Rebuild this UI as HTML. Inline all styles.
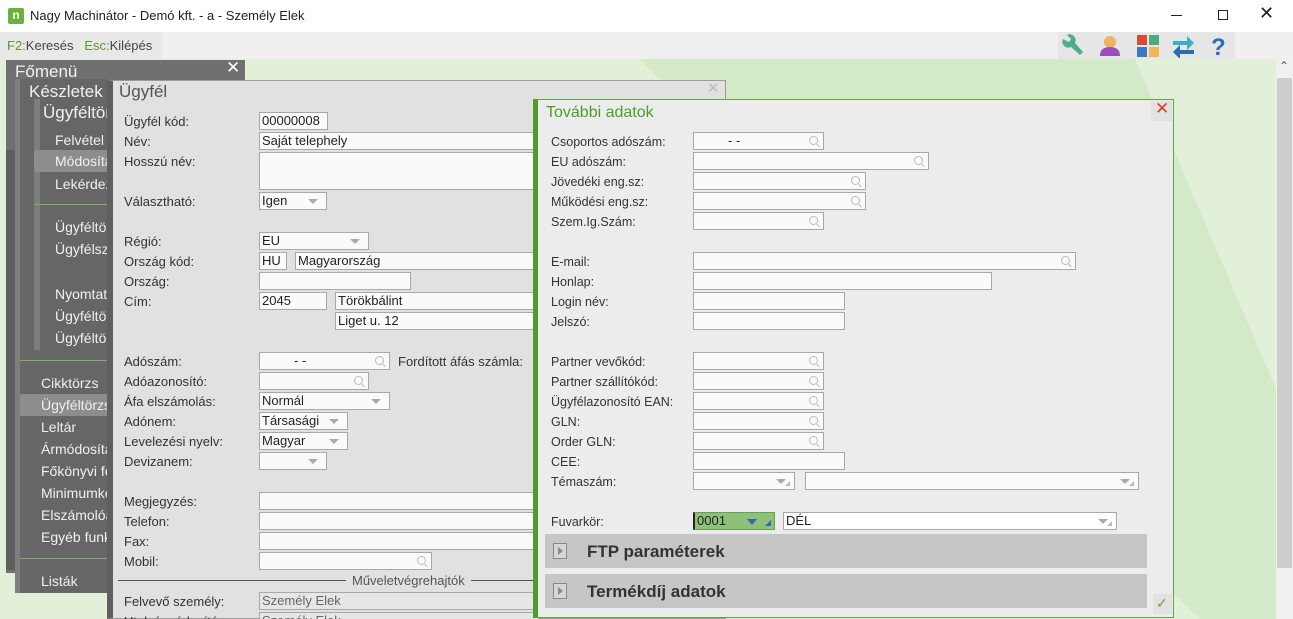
<!DOCTYPE html>
<html style="overflow:hidden;width:1293px;height:619px"><head><meta charset="utf-8">
<style>
*{box-sizing:border-box;margin:0;padding:0}
body{width:1293px;height:619px;overflow:hidden;position:relative;font-family:"Liberation Sans",Arial,sans-serif;font-size:13px;color:#333;background:#e2f0da}
.a{position:absolute}
.t{position:absolute;white-space:nowrap;line-height:16px}
.in{position:absolute;height:18px;background:#fafafa;border:1px solid #a8a8a8;font-size:13px;line-height:16px;padding-left:2px;color:#222;white-space:nowrap;overflow:hidden}
.dd::after{content:"";position:absolute;right:8px;top:6px;border-left:5px solid transparent;border-right:5px solid transparent;border-top:5px solid #aaa}
.sr::after{content:"";position:absolute;right:5px;top:3px;width:7px;height:7px;border:1px solid #bbb;border-radius:50%}
.sr::before{content:"";position:absolute;right:3px;top:12px;width:4px;height:1px;background:#bbb;transform:rotate(45deg)}
.m{color:#f0f0f0;font-size:14px}
.r{font-size:12.5px;color:#333}
.tr::before{content:"";position:absolute;right:4px;bottom:3px;border-left:5px solid transparent;border-bottom:5px solid #bbb}
</style></head><body>
<div class="a" style="left:0;top:0;width:1293px;height:619px;overflow:hidden">
<!-- title bar -->
<div class="a" style="left:0;top:0;width:1293px;height:32px;background:#fff"></div>
<div class="a" style="left:8px;top:8px;width:16px;height:16px;background:#6ab23e;border-radius:2px;color:#fff;font-size:12px;font-weight:bold;line-height:15px;text-align:center">n</div>
<div class="t" style="left:30px;top:8px;font-size:13px;color:#222">Nagy Machinátor - Demó kft. - a - Személy Elek</div>
<div class="a" style="left:1171px;top:15px;width:11px;height:1px;background:#222"></div>
<div class="a" style="left:1218px;top:10px;width:10px;height:10px;border:1px solid #222"></div>
<div class="t" style="left:1259px;top:5px;font-size:18px;color:#222">✕</div>
<!-- toolbar -->
<div class="a" style="left:0;top:32px;width:1293px;height:27px;background:#efefef"></div>
<div class="a" style="left:0;top:32px;width:162px;height:27px;background:#e8e8e8"></div>
<div class="t" style="left:7px;top:38px;font-size:13px;color:#444"><span style="color:#5a9a33">F2:</span>Keresés&nbsp;&nbsp;&nbsp;<span style="color:#5a9a33">Esc:</span>Kilépés</div>
<div class="a" style="left:1058px;top:32px;width:177px;height:27px;background:#e6e6e6"></div>
<svg class="a" style="left:1060px;top:33px" width="175" height="25">
<path d="M3 6 a6 6 0 0 0 8 8 l9 8 l3 -3 l-8 -9 a6 6 0 0 0 -8 -8 l4 4 l-2 3 z" fill="#4caf87"/>
<circle cx="50" cy="9" r="6" fill="#f0b45c"/><path d="M40 23 q0 -9 10 -9 q10 0 10 9 z" fill="#9b4dbb"/>
<rect x="77" y="2" width="10" height="10" fill="#d94a32"/><rect x="89" y="2" width="10" height="10" fill="#4aab7c"/><rect x="77" y="14" width="10" height="10" fill="#3b79c3"/><rect x="89" y="14" width="10" height="10" fill="#f0b45c"/>
<path d="M113 8 h14 v-5 l7 7 l-7 7 v-5 h-14z" fill="#3bb0c3"/><path d="M134 17 h-14 v-5 l-7 7 l7 7 v-5 h14z" fill="#2b6db3"/>
<text x="151" y="22" font-family="Liberation Sans" font-weight="bold" font-size="24" fill="#2b6db3">?</text>
</svg>
<!-- background diagonal -->
<svg class="a" style="left:0;top:59px" width="1276" height="560"><polygon points="640,0 1135,0 1276,330 1276,560 1200,560" fill="#d3e9c8"/></svg>
<!-- scrollbar -->
<div class="a" style="left:1276px;top:59px;width:17px;height:560px;background:#f0f0f0"></div>
<div class="a" style="left:1277px;top:78px;width:15px;height:490px;background:#cdcdcd"></div>
<div class="t" style="left:1279px;top:58px;font-size:12px;color:#555">⌃</div>
<!-- main menu -->
<div class="a" style="left:6px;top:60px;width:239px;height:513px;background:#707070"></div>
<div class="a" style="left:6px;top:150px;width:14px;height:420px;background:#5e5e5e"></div>
<div class="t m" style="left:15px;top:63px;font-size:17px;line-height:18px">Főmenü</div>
<div class="t" style="left:226px;top:60px;font-size:17px;color:#fff">✕</div>
<div class="a" style="left:15px;top:79px;width:92px;height:514px;background:#7e7e7e"></div>
<div class="a" style="left:20px;top:79px;width:87px;height:514px;background:#666"></div>
<div class="t m" style="left:29px;top:83px;font-size:17px;line-height:18px">Készletek</div>
<div class="a" style="left:34px;top:99px;width:73px;height:172px;background:#666;border-left:6px solid #7d7d7d"></div>
<div class="t m" style="left:43px;top:104px;font-size:17px;line-height:18px">Ügyféltör</div>
<div class="t m" style="left:55px;top:132px">Felvétel</div>
<div class="a" style="left:34px;top:150px;width:73px;height:22px;background:#8d8d8d"></div>
<div class="t m" style="left:55px;top:153px">Módosítás</div>
<div class="t m" style="left:55px;top:176px">Lekérdez</div>
<div class="a" style="left:34px;top:204px;width:73px;height:1px;background:#7fae6a"></div>
<div class="a" style="left:34px;top:270px;width:73px;height:1px;background:#7fae6a"></div>
<div class="a" style="left:34px;top:206px;width:73px;height:144px;background:#666;border-left:6px solid #7d7d7d"></div>
<div class="t m" style="left:55px;top:219px">Ügyféltör</div>
<div class="t m" style="left:55px;top:241px">Ügyfélsz</div>
<div class="t m" style="left:55px;top:286px">Nyomtat</div>
<div class="t m" style="left:55px;top:308px">Ügyféltör</div>
<div class="t m" style="left:55px;top:330px">Ügyféltör</div>
<div class="a" style="left:20px;top:360px;width:87px;height:1px;background:#7fae6a"></div>
<div class="t m" style="left:41px;top:375px">Cikktörzs</div>
<div class="a" style="left:20px;top:394px;width:87px;height:22px;background:#8d8d8d"></div>
<div class="t m" style="left:41px;top:397px">Ügyféltörzs</div>
<div class="t m" style="left:41px;top:419px">Leltár</div>
<div class="t m" style="left:41px;top:441px">Ármódosítás</div>
<div class="t m" style="left:41px;top:463px">Főkönyvi fe</div>
<div class="t m" style="left:41px;top:485px">Minimumké</div>
<div class="t m" style="left:41px;top:507px">Elszámolóa</div>
<div class="t m" style="left:41px;top:529px">Egyéb funk</div>
<div class="a" style="left:20px;top:558px;width:87px;height:1px;background:#7fae6a"></div>
<div class="t m" style="left:41px;top:573px">Listák</div>
<!-- Ügyfél dialog -->
<div class="a" style="left:107px;top:80px;width:619px;height:539px;background:#e1e1e1;border:1px solid #9a9a9a;border-left:6px solid #5f5f5f"></div>
<div class="t" style="left:119px;top:82px;font-size:17px;line-height:20px;color:#555">Ügyfél</div>
<div class="t" style="left:707px;top:81px;font-size:15px;color:#bbb">✕</div>
<div class="t" style="left:124px;top:114px">Ügyfél kód:</div><div class="in" style="left:259px;top:112px;width:69px">00000008</div>
<div class="t" style="left:124px;top:134px">Név:</div><div class="in" style="left:259px;top:132px;width:280px">Saját telephely</div>
<div class="t" style="left:124px;top:154px">Hosszú név:</div><div class="in" style="left:259px;top:152px;width:280px;height:38px"></div>
<div class="t" style="left:124px;top:194px">Választható:</div><div class="in dd" style="left:259px;top:192px;width:68px">Igen</div>
<div class="t" style="left:124px;top:234px">Régió:</div><div class="in dd" style="left:259px;top:232px;width:110px">EU</div>
<div class="t" style="left:124px;top:254px">Ország kód:</div><div class="in" style="left:259px;top:252px;width:28px">HU</div><div class="in" style="left:295px;top:252px;width:244px">Magyarország</div>
<div class="t" style="left:124px;top:274px">Ország:</div><div class="in" style="left:259px;top:272px;width:152px"></div>
<div class="t" style="left:124px;top:294px">Cím:</div><div class="in" style="left:259px;top:292px;width:68px">2045</div><div class="in" style="left:335px;top:292px;width:204px">Törökbálint</div>
<div class="in" style="left:335px;top:312px;width:204px">Liget u. 12</div>
<div class="t" style="left:124px;top:354px">Adószám:</div><div class="in sr" style="left:259px;top:352px;width:131px;padding-left:34px">- -</div>
<div class="t" style="left:398px;top:354px">Fordított áfás számla:</div>
<div class="t" style="left:124px;top:374px">Adóazonosító:</div><div class="in sr" style="left:259px;top:372px;width:110px"></div>
<div class="t" style="left:124px;top:394px">Áfa elszámolás:</div><div class="in dd" style="left:259px;top:392px;width:131px">Normál</div>
<div class="t" style="left:124px;top:414px">Adónem:</div><div class="in dd" style="left:259px;top:412px;width:89px">Társasági</div>
<div class="t" style="left:124px;top:434px">Levelezési nyelv:</div><div class="in dd" style="left:259px;top:432px;width:89px">Magyar</div>
<div class="t" style="left:124px;top:454px">Devizanem:</div><div class="in dd" style="left:259px;top:452px;width:68px"></div>
<div class="t" style="left:124px;top:494px">Megjegyzés:</div><div class="in" style="left:259px;top:492px;width:280px"></div>
<div class="t" style="left:124px;top:514px">Telefon:</div><div class="in" style="left:259px;top:512px;width:280px"></div>
<div class="t" style="left:124px;top:534px">Fax:</div><div class="in" style="left:259px;top:532px;width:280px"></div>
<div class="t" style="left:124px;top:554px">Mobil:</div><div class="in sr" style="left:259px;top:552px;width:173px"></div>
<div class="a" style="left:118px;top:580px;width:420px;height:1px;background:#555"></div>
<div class="t" style="left:346px;top:573px;background:#e1e1e1;padding:0 6px;color:#555">Műveletvégrehajtók</div>
<div class="t" style="left:124px;top:594px">Felvevő személy:</div><div class="in" style="left:259px;top:592px;width:280px;background:#e6e6e6;color:#666">Személy Elek</div>
<div class="t" style="left:124px;top:614px">Utolsó módosító:</div><div class="in" style="left:259px;top:612px;width:280px;background:#e6e6e6;color:#666">Személy Elek</div>
<!-- További adatok -->
<div class="a" style="left:533px;top:99px;width:641px;height:519px;background:#ececec;border:1px solid #5fa83a;border-left:5px solid #4c9e2a"></div>
<div class="t" style="left:546px;top:104px;font-size:16px;line-height:18px;color:#4c9e2a">További adatok</div>
<div class="a" style="left:1151px;top:101px;width:21px;height:20px;background:#e2e2e2"></div>
<div class="t" style="left:1155px;top:101px;font-size:17px;color:#d8402c">✕</div>
<div class="t r" style="left:551px;top:134px">Csoportos adószám:</div><div class="in sr" style="left:693px;top:132px;width:131px;padding-left:34px">- -</div>
<div class="t r" style="left:551px;top:154px">EU adószám:</div><div class="in sr" style="left:693px;top:152px;width:236px"></div>
<div class="t r" style="left:551px;top:174px">Jövedéki eng.sz:</div><div class="in sr" style="left:693px;top:172px;width:173px"></div>
<div class="t r" style="left:551px;top:194px">Működési eng.sz:</div><div class="in sr" style="left:693px;top:192px;width:173px"></div>
<div class="t r" style="left:551px;top:214px">Szem.Ig.Szám:</div><div class="in sr" style="left:693px;top:212px;width:131px"></div>
<div class="t r" style="left:551px;top:254px">E-mail:</div><div class="in sr" style="left:693px;top:252px;width:383px"></div>
<div class="t r" style="left:551px;top:274px">Honlap:</div><div class="in" style="left:693px;top:272px;width:299px"></div>
<div class="t r" style="left:551px;top:294px">Login név:</div><div class="in" style="left:693px;top:292px;width:152px"></div>
<div class="t r" style="left:551px;top:314px">Jelszó:</div><div class="in" style="left:693px;top:312px;width:152px"></div>
<div class="t r" style="left:551px;top:354px">Partner vevőkód:</div><div class="in sr" style="left:693px;top:352px;width:131px"></div>
<div class="t r" style="left:551px;top:374px">Partner szállítókód:</div><div class="in sr" style="left:693px;top:372px;width:131px"></div>
<div class="t r" style="left:551px;top:394px">Ügyfélazonosító EAN:</div><div class="in sr" style="left:693px;top:392px;width:131px"></div>
<div class="t r" style="left:551px;top:414px">GLN:</div><div class="in sr" style="left:693px;top:412px;width:131px"></div>
<div class="t r" style="left:551px;top:434px">Order GLN:</div><div class="in sr" style="left:693px;top:432px;width:131px"></div>
<div class="t r" style="left:551px;top:454px">CEE:</div><div class="in" style="left:693px;top:452px;width:152px"></div>
<div class="t r" style="left:551px;top:474px">Témaszám:</div><div class="in dd tr" style="left:693px;top:472px;width:102px"></div><div class="in dd tr" style="left:805px;top:472px;width:334px"></div>
<div class="t r" style="left:551px;top:514px">Fuvarkör:</div>
<div class="in" style="left:693px;top:512px;width:82px;background:#8fc07a;border-color:#6a9e55;border-left:2px solid #222">0001<span style="position:absolute;left:52px;top:6px;border-left:5px solid transparent;border-right:5px solid transparent;border-top:6px solid #2b6db3"></span><span style="position:absolute;right:3px;bottom:3px;border-left:6px solid transparent;border-bottom:6px solid #2b6db3"></span></div>
<div class="in dd tr" style="left:783px;top:512px;width:334px;background:#fff">DÉL</div>
<div class="a" style="left:545px;top:534px;width:602px;height:34px;background:#c6c6c6"></div>
<div class="a" style="left:553px;top:543px;width:14px;height:16px;border:1px solid #888;background:#d6d6d6"></div>
<div class="a" style="left:558px;top:547px;border-top:4px solid transparent;border-bottom:4px solid transparent;border-left:5px solid #888"></div>
<div class="t" style="left:587px;top:542px;font-size:17px;line-height:19px;font-weight:bold;color:#333">FTP paraméterek</div>
<div class="a" style="left:545px;top:574px;width:602px;height:34px;background:#c6c6c6"></div>
<div class="a" style="left:553px;top:583px;width:14px;height:16px;border:1px solid #888;background:#d6d6d6"></div>
<div class="a" style="left:558px;top:587px;border-top:4px solid transparent;border-bottom:4px solid transparent;border-left:5px solid #888"></div>
<div class="t" style="left:587px;top:582px;font-size:17px;line-height:19px;font-weight:bold;color:#333">Termékdíj adatok</div>
<div class="a" style="left:1153px;top:594px;width:19px;height:20px;background:#e2e2e2"></div>
<div class="t" style="left:1156px;top:595px;font-size:14px;color:#5fa83a">✓</div>
</div>
</body></html>
